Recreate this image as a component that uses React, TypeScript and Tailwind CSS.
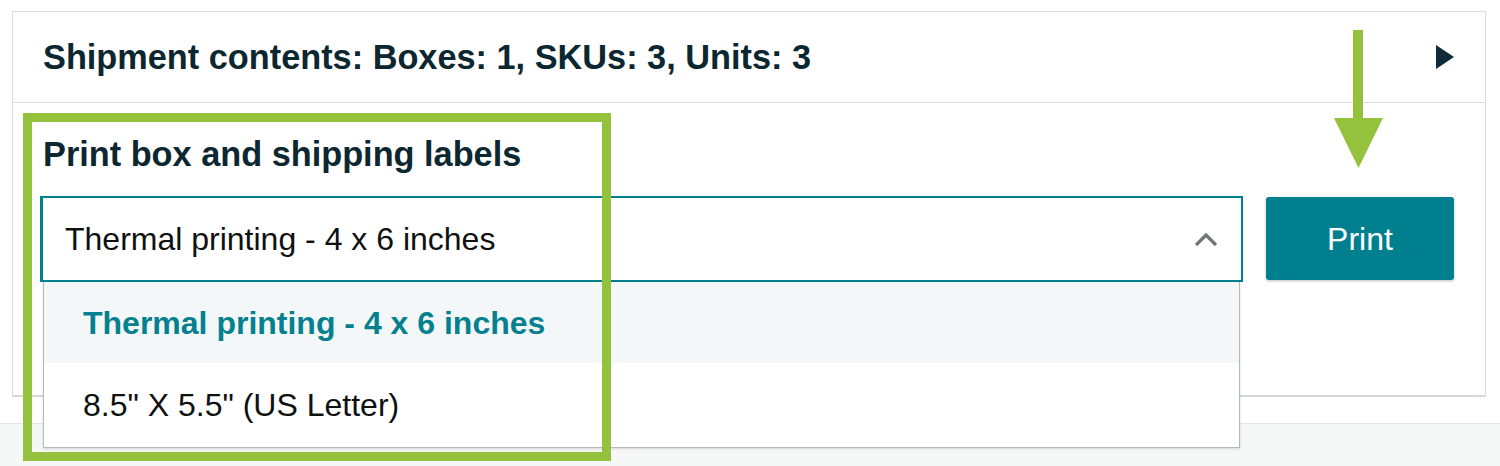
export default function App() {
  return (
    <div
      className="relative w-full h-[466px] bg-white overflow-hidden text-[#0c2730]"
      style={{ fontFamily: '"Liberation Sans", Arial, sans-serif' }}
    >
      {/* PANEL */}
      <div className="pt-[11px] pl-[12px] pr-[14px]">
        <div className="border border-[#dcdede] border-b-2 border-b-[#d5d8d8]">
          <div className="h-[91px] flex items-center justify-between pl-[30px] pr-[31px] border-b border-[#dcdede]">
            <p className="text-[34.3px] leading-[40px] font-bold">
              Shipment contents: Boxes: 1, SKUs: 3, Units: 3
            </p>
            <svg width="18" height="24" viewBox="0 0 18 24">
              <polygon points="0,0 18,12 0,24" fill="#0f2b38" />
            </svg>
          </div>

          <div className="pl-[27px] pr-[31px] pt-[31px] pb-[113px]">
            <p className="text-[34.3px] leading-[40px] font-bold ml-[3px]">
              Print box and shipping labels
            </p>
            <div className="flex items-start gap-[23px] mt-[22px]">
              <div className="relative flex-1">
                <div className="h-[86px] border-2 border-l-[3px] border-[#00808f] flex items-center justify-between pl-[22px] pr-[23px]">
                  <span className="text-[32px] leading-none text-[#0f1111]">Thermal printing - 4 x 6 inches</span>
                  <svg width="24" height="15" viewBox="0 0 24 15">
                    <polyline
                      points="2,13 12,3 22,13"
                      fill="none"
                      stroke="#6f7676"
                      strokeWidth={3.2}
                    />
                  </svg>
                </div>

                {/* DROPDOWN */}
                <div className="absolute left-[3px] right-[3px] top-[86px] z-10 bg-white border border-t-0 border-[#b4b8b8] shadow-sm">
                  <div className="h-[81px] flex items-center pl-[39px] bg-[#f3f7f8]">
                    <span className="text-[32px] leading-none font-bold text-[#05808f]">
                      Thermal printing - 4 x 6 inches
                    </span>
                  </div>
                  <div className="h-[84px] flex items-center pl-[39px] bg-white">
                    <span className="text-[32px] leading-none text-[#0f1111]">8.5" X 5.5" (US Letter)</span>
                  </div>
                </div>
              </div>

              <button className="w-[188px] h-[83px] mt-px rounded-[3px] bg-[#00808f] text-white text-[32px] leading-none shadow-[0_1px_3px_rgba(0,0,0,0.25)]">
                Print
              </button>
            </div>
          </div>
        </div>
      </div>

      {/* FOOTER STRIP */}
      <div className="mt-[26px] h-[60px] border-t border-[#e3e5e5] bg-[#f6f7f7]" />

      {/* ANNOTATIONS */}
      <div className="absolute left-[23px] top-[113px] w-[588px] h-[348px] border-[9px] border-[#95c23d] z-20" />
      <svg
        className="absolute left-[1334px] top-[30px] z-20"
        width="50"
        height="138"
        viewBox="0 0 50 138"
      >
        <rect x="19" y="0" width="10" height="90" fill="#95c23d" />
        <polygon points="0,88 49,88 24.5,138" fill="#95c23d" />
      </svg>
    </div>
  );
}
